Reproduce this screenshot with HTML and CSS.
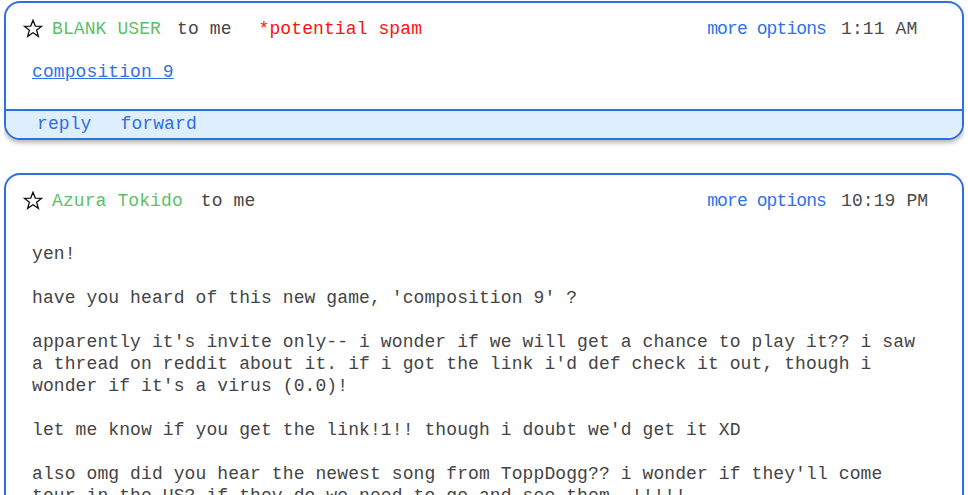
FILE: index.html
```html
<!DOCTYPE html>
<html>
<head>
<meta charset="utf-8">
<link rel="stylesheet" href="styles.css">
</head>
<body>
<div class="card">
  <div class="head">
    <svg class="star" width="20" height="19" viewBox="0 0 20 19"><polygon points="10,1.2 12.3,7.1 18.6,7.3 13.6,11.2 15.4,17.4 10,13.8 4.6,17.4 6.4,11.2 1.4,7.3 7.7,7.1" fill="none" stroke="#111" stroke-width="1.3" stroke-linejoin="miter"/></svg>
    <span class="from">BLANK USER</span>
    <span class="tome">to me</span>
    <span class="spam">*potential spam</span>
    <span class="spacer"></span>
    <a class="more">more options</a>
    <span class="time">1:11 AM</span>
  </div>
  <div class="short"><a class="link">composition 9</a></div>
  <div class="foot"><a class="act">reply</a><a class="act">forward</a></div>
</div>
<div class="card card2">
  <div class="head">
    <svg class="star" width="20" height="19" viewBox="0 0 20 19"><polygon points="10,1.2 12.3,7.1 18.6,7.3 13.6,11.2 15.4,17.4 10,13.8 4.6,17.4 6.4,11.2 1.4,7.3 7.7,7.1" fill="none" stroke="#111" stroke-width="1.3" stroke-linejoin="miter"/></svg>
    <span class="from">Azura Tokido</span>
    <span class="tome tome2">to me</span>
    <span class="spacer"></span>
    <a class="more">more options</a>
    <span class="time">10:19 PM</span>
  </div>
  <div class="msg">
    <p>yen!</p>
    <p>have you heard of this new game, 'composition 9' ?</p>
    <p>apparently it's invite only-- i wonder if we will get a chance to play it?? i saw<br>a thread on reddit about it. if i got the link i'd def check it out, though i<br>wonder if it's a virus (0.0)!</p>
    <p>let me know if you get the link!1!! though i doubt we'd get it XD</p>
    <p>also omg did you hear the newest song from ToppDogg?? i wonder if they'll come<br>tour in the US? if they do we need to go and see them. !!!!!</p>
  </div>
</div>
</body>
</html>
```

FILE: styles.css
```css
html, body {
  background: #ffffff;
}
body {
  margin: 1px 4px 0;
  font-family: "Liberation Mono", "DejaVu Sans Mono", monospace;
  font-size: 18px;
  letter-spacing: 0.1px;
  color: #444444;
}
.card {
  border: 2px solid #2f6fe4;
  border-radius: 16px;
  background: #ffffff;
  box-shadow: 0 3px 4px rgba(0, 0, 0, 0.28);
  overflow: hidden;
}
.card2 {
  margin-top: 33px;
}
.head {
  display: flex;
  align-items: center;
  height: 22px;
  line-height: 22px;
  padding: 15px 33px 0 17px;
  white-space: nowrap;
}
.star {
  display: block;
  margin-right: 9px;
  margin-top: -2px;
}
.from {
  color: #5cbf6a;
}
.tome {
  margin-left: 16px;
  color: #444444;
}
.tome2 {
  margin-left: 18px;
}
.spam {
  margin-left: 27px;
  color: #ff1010;
}
.spacer {
  flex: 1;
}
.more {
  color: #2f72e8;
  letter-spacing: -0.9px;
}
.time {
  margin-left: 15px;
  width: 88px;
  color: #4a4a4a;
}
.short {
  margin: 21px 0 26px;
  padding-left: 26px;
  line-height: 22px;
}
.link {
  color: #2f72e8;
  text-decoration: underline;
}
.foot {
  border-top: 2px solid #2f6fe4;
  background: #dfeefd;
  height: 27px;
  line-height: 27px;
  padding-left: 31px;
  display: flex;
  gap: 29px;
}
.act {
  color: #2f6fe4;
}
.msg {
  padding: 9px 0 20px 26px;
  line-height: 22px;
  white-space: nowrap;
}
.msg p {
  margin: 22px 0 0;
}
```
